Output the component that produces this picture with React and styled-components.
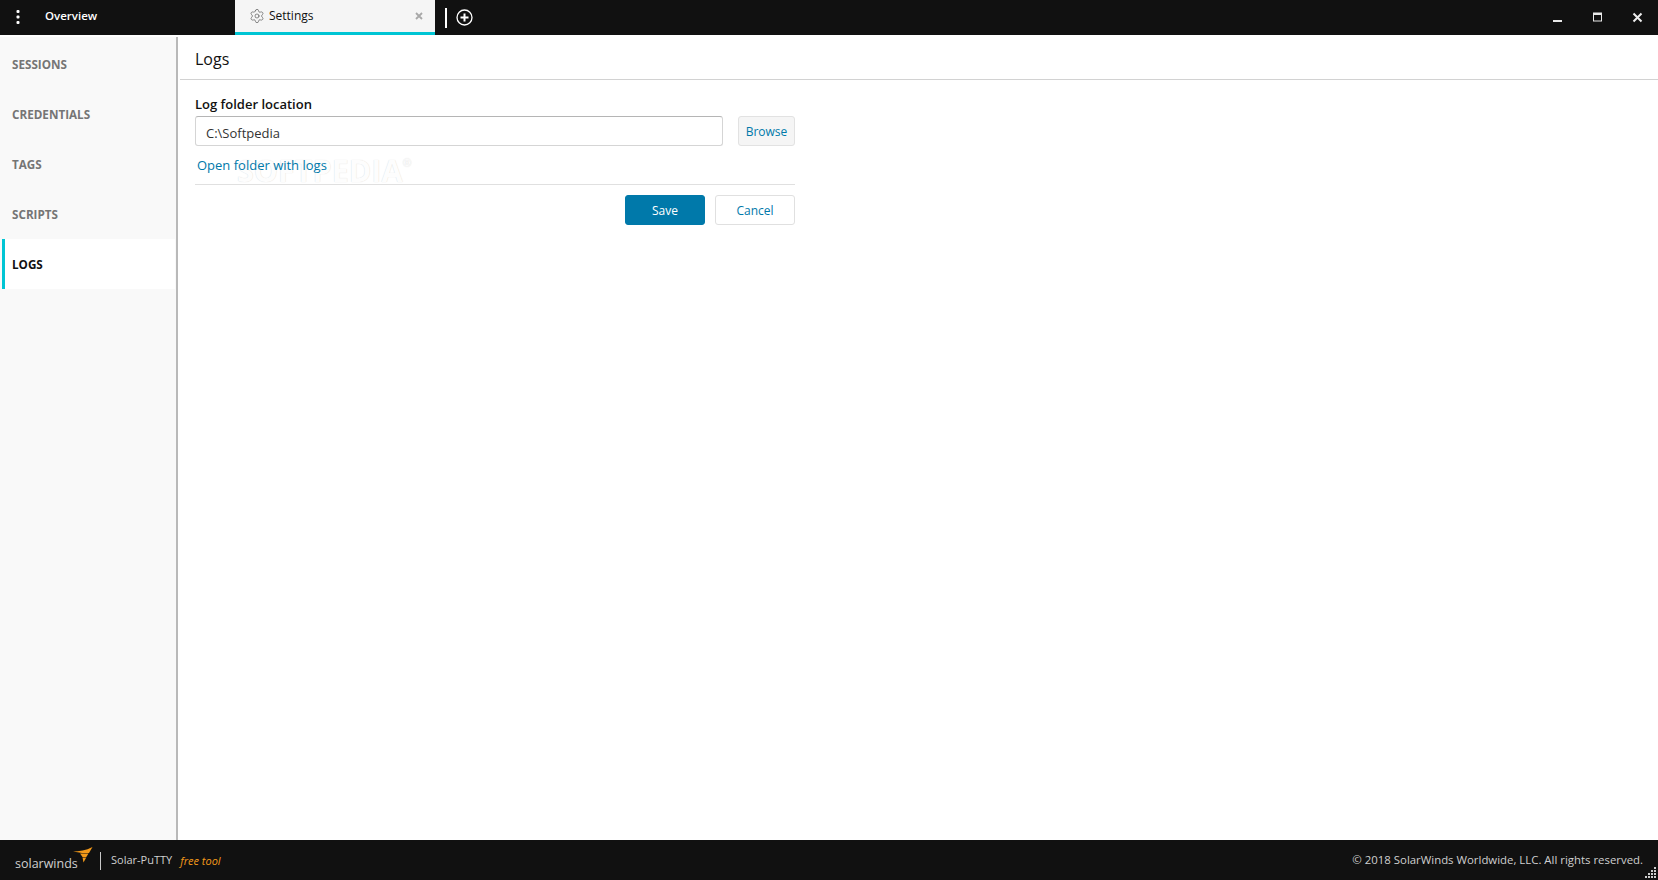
import { createGlobalStyle } from "styled-components";
import styled from "styled-components";
import { Settings } from "lucide-react";

const GlobalStyle = createGlobalStyle`
  html, body, #root {
    margin: 0;
    height: 100%;
  }
  body {
    background: #ffffff;
    font-family: "Open Sans", "Noto Sans", sans-serif;
  }
`;

const Page = styled.div`
  display: flex;
  flex-direction: column;
  height: 880px;
  width: 1658px;
  overflow: hidden;
`;

const TopBar = styled.div`
  display: flex;
  align-items: stretch;
  height: 35px;
  flex-shrink: 0;
  background: #111111;
  color: #ffffff;
`;

const MenuButton = styled.div`
  width: 35px;
  display: flex;
  align-items: center;
  justify-content: center;
  padding-bottom: 1px;
  svg {
    display: block;
  }
`;

const OverviewTab = styled.div`
  width: 200px;
  padding: 0 0 5px 10px;
  box-sizing: border-box;
  display: flex;
  align-items: center;
  font-size: 11.5px;
  font-weight: 600;
`;

const ActiveTab = styled.div`
  width: 200px;
  box-sizing: border-box;
  padding: 0 10px 1px 14px;
  display: flex;
  align-items: center;
  gap: 4px;
  background: #f5f5f5;
  border-bottom: 3px solid #00c5d4;
  color: #111111;
  font-size: 12px;
`;

const TabTitle = styled.span`
  flex: 1;
`;

const TabClose = styled.svg`
  width: 8px;
  height: 8px;
  margin-right: 2px;
`;

const NewTabGroup = styled.div`
  display: flex;
  align-items: center;
  gap: 9px;
  margin-left: 10px;
`;

const TabDivider = styled.div`
  width: 2px;
  height: 20px;
  background: #ffffff;
  margin-top: 1px;
`;

const WindowButtons = styled.div`
  margin-left: auto;
  display: flex;
  align-items: center;
  gap: 20px;
  padding-right: 10px;
`;

const Body = styled.div`
  flex: 1;
  display: flex;
  min-height: 0;
  padding-top: 2px;
`;

const Sidebar = styled.nav`
  width: 178px;
  box-sizing: border-box;
  flex-shrink: 0;
  padding: 2px 0 0 2px;
  background: #f9f9f9;
  border-right: 2px solid #b9b9b9;
`;

const NavItem = styled.div`
  height: 50px;
  box-sizing: border-box;
  display: flex;
  align-items: center;
  padding-left: ${(p) => (p.$active ? "7px" : "10px")};
  font-size: 11.7px;
  font-weight: 700;
  color: ${(p) => (p.$active ? "#111111" : "#757575")};
  background: ${(p) => (p.$active ? "#ffffff" : "transparent")};
  border-left: ${(p) => (p.$active ? "3px solid #00c5d4" : "none")};
  margin-right: 1px;
`;

const Main = styled.main`
  flex: 1;
  min-width: 0;
  padding-left: 2px;
`;

const Heading = styled.h1`
  margin: 0;
  height: 43px;
  box-sizing: border-box;
  padding: 11px 0 0 15px;
  font-size: 16px;
  line-height: 22px;
  font-weight: 400;
  color: #111111;
  border-bottom: 1px solid #d2d2d2;
`;

const Form = styled.form`
  position: relative;
  width: 600px;
  margin-left: 15px;
  padding-top: 15px;
`;

const Label = styled.label`
  display: block;
  font-size: 13px;
  font-weight: 600;
  line-height: 18px;
  color: #111111;
`;

const FieldRow = styled.div`
  display: flex;
  gap: 15px;
  margin-top: 3px;
`;

const PathInput = styled.div`
  flex: 1;
  height: 30px;
  box-sizing: border-box;
  padding: 4px 0 0 10px;
  display: flex;
  align-items: center;
  font-size: 13px;
  color: #333333;
  background: #ffffff;
  border: 1px solid #d5d5d5;
  border-top-color: #b5b5b5;
  border-radius: 3px;
`;

const BrowseButton = styled.div`
  width: 57px;
  height: 30px;
  box-sizing: border-box;
  display: flex;
  align-items: center;
  justify-content: center;
  font-size: 12px;
  color: #0079aa;
  background: #f5f5f5;
  border: 1px solid #e2e2e2;
  border-radius: 3px;
`;

const FolderLink = styled.a`
  position: relative;
  z-index: 1;
  display: block;
  margin: 10px 0 0 2px;
  font-size: 13px;
  line-height: 18px;
  color: #0079aa;
`;

const Watermark = styled.span`
  position: absolute;
  left: 42px;
  top: 74px;
  font-size: 30.5px;
  line-height: 32px;
  font-weight: 700;
  color: #fdfdfd;
  text-shadow: 0 0 1px #d4d4d4;
  pointer-events: none;
  sup {
    font-size: 11px;
    font-weight: 400;
    vertical-align: 15px;
    line-height: 0;
  }
`;

const Separator = styled.div`
  height: 1px;
  margin-top: 10px;
  background: #e0e0e0;
`;

const Actions = styled.div`
  display: flex;
  justify-content: flex-end;
  gap: 10px;
  margin-top: 10px;
`;

const ActionButton = styled.div`
  width: 80px;
  height: 30px;
  box-sizing: border-box;
  display: flex;
  align-items: center;
  justify-content: center;
  font-size: 12px;
  border-radius: 3px;
  color: ${(p) => (p.$primary ? "#ffffff" : "#0079aa")};
  background: ${(p) => (p.$primary ? "#0079aa" : "#ffffff")};
  border: 1px solid ${(p) => (p.$primary ? "#0079aa" : "#e0e0e0")};
`;

const Footer = styled.footer`
  position: relative;
  height: 40px;
  flex-shrink: 0;
  display: flex;
  align-items: center;
  padding: 0 15px;
  background: #111111;
  color: #cfcfcf;
  font-size: 11px;
`;

const Brand = styled.div`
  position: relative;
  width: 78px;
  font-size: 12.5px;
  line-height: 14px;
  padding-top: 7px;
`;

const BrandBird = styled.svg`
  position: absolute;
  left: 58px;
  top: -3px;
`;

const BrandDivider = styled.div`
  width: 1px;
  height: 18px;
  margin: 1px 10px 0 7px;
  background: #c8c8c8;
`;

const ProductName = styled.span`
  margin-bottom: 1px;
`;

const FreeTool = styled.em`
  margin: 1px 0 0 8px;
  font-size: 11px;
  color: #f49a1a;
`;

const Copyright = styled.span`
  margin-left: auto;
  margin-bottom: 1px;
  font-size: 11.4px;
`;

const Grip = styled.svg`
  position: absolute;
  right: 2px;
  bottom: 2px;
`;

const navItems = ["SESSIONS", "CREDENTIALS", "TAGS", "SCRIPTS", "LOGS"];

function GripDots() {
  const dots = [];
  for (let row = 0; row < 4; row++) {
    for (let col = 3 - row; col < 4; col++) {
      dots.push(<rect key={row + "-" + col} x={col * 3} y={row * 3} width="2" height="2" fill="#cccccc" />);
    }
  }
  return (
    <Grip width="11" height="11" viewBox="0 0 11 11">
      {dots}
    </Grip>
  );
}

export default function App() {
  return (
    <Page>
      <GlobalStyle />
      <TopBar>
        <MenuButton>
          <svg width="4" height="14" viewBox="0 0 4 14" fill="#ffffff">
            <rect x="0.5" y="0" width="3" height="3" rx="1" />
            <rect x="0.5" y="5.5" width="3" height="3" rx="1" />
            <rect x="0.5" y="11" width="3" height="3" rx="1" />
          </svg>
        </MenuButton>
        <OverviewTab>Overview</OverviewTab>
        <ActiveTab>
          <Settings size={16} strokeWidth={1} color="#555555" />
          <TabTitle>Settings</TabTitle>
          <TabClose viewBox="0 0 8 8">
            <path d="M1 1l6 6M7 1l-6 6" stroke="#a8a8a8" strokeWidth="1.8" />
          </TabClose>
        </ActiveTab>
        <NewTabGroup>
          <TabDivider />
          <svg width="17" height="17" viewBox="0 0 17 17">
            <circle cx="8.5" cy="8.5" r="7.5" fill="none" stroke="#ffffff" strokeWidth="1.3" />
            <path d="M8.5 4.5v8M4.5 8.5h8" stroke="#ffffff" strokeWidth="2" />
          </svg>
        </NewTabGroup>
        <WindowButtons>
          <svg width="20" height="12" viewBox="0 0 20 12">
            <rect x="5" y="8" width="9" height="2" fill="#e8e8e8" />
          </svg>
          <svg width="20" height="12" viewBox="0 0 20 12">
            <rect x="5.5" y="1" width="8" height="8" fill="none" stroke="#e8e8e8" strokeWidth="1" />
            <rect x="5" y="1" width="9" height="2" fill="#e8e8e8" />
          </svg>
          <svg width="20" height="12" viewBox="0 0 20 12">
            <path d="M5.5 1.5l8 8M13.5 1.5l-8 8" stroke="#eeeeee" strokeWidth="2" />
          </svg>
        </WindowButtons>
      </TopBar>
      <Body>
        <Sidebar>
          {navItems.map((item) => (
            <NavItem key={item} $active={item === "LOGS"}>
              {item}
            </NavItem>
          ))}
        </Sidebar>
        <Main>
          <Heading>Logs</Heading>
          <Form>
            <Label>Log folder location</Label>
            <FieldRow>
              <PathInput>C:\Softpedia</PathInput>
              <BrowseButton>Browse</BrowseButton>
            </FieldRow>
            <FolderLink>Open folder with logs</FolderLink>
            <Watermark>
              SOFTPEDIA<sup>®</sup>
            </Watermark>
            <Separator />
            <Actions>
              <ActionButton $primary>Save</ActionButton>
              <ActionButton>Cancel</ActionButton>
            </Actions>
          </Form>
        </Main>
      </Body>
      <Footer>
        <Brand>
          solarwinds
          <BrandBird width="20" height="16" viewBox="0 0 20 16" fill="#f49a1a">
            <path d="M0 4.5C6 4.5 13 3.5 19.5 0L16 6L9 6Z" />
            <path d="M7 6.5L15.5 6.5L13 10.5L9.5 10Z" />
            <path d="M9.5 10.5L13 11L10.5 15.5Z" />
          </BrandBird>
        </Brand>
        <BrandDivider />
        <ProductName>Solar-PuTTY</ProductName>
        <FreeTool>free tool</FreeTool>
        <Copyright>© 2018 SolarWinds Worldwide, LLC. All rights reserved.</Copyright>
        <GripDots />
      </Footer>
    </Page>
  );
}
